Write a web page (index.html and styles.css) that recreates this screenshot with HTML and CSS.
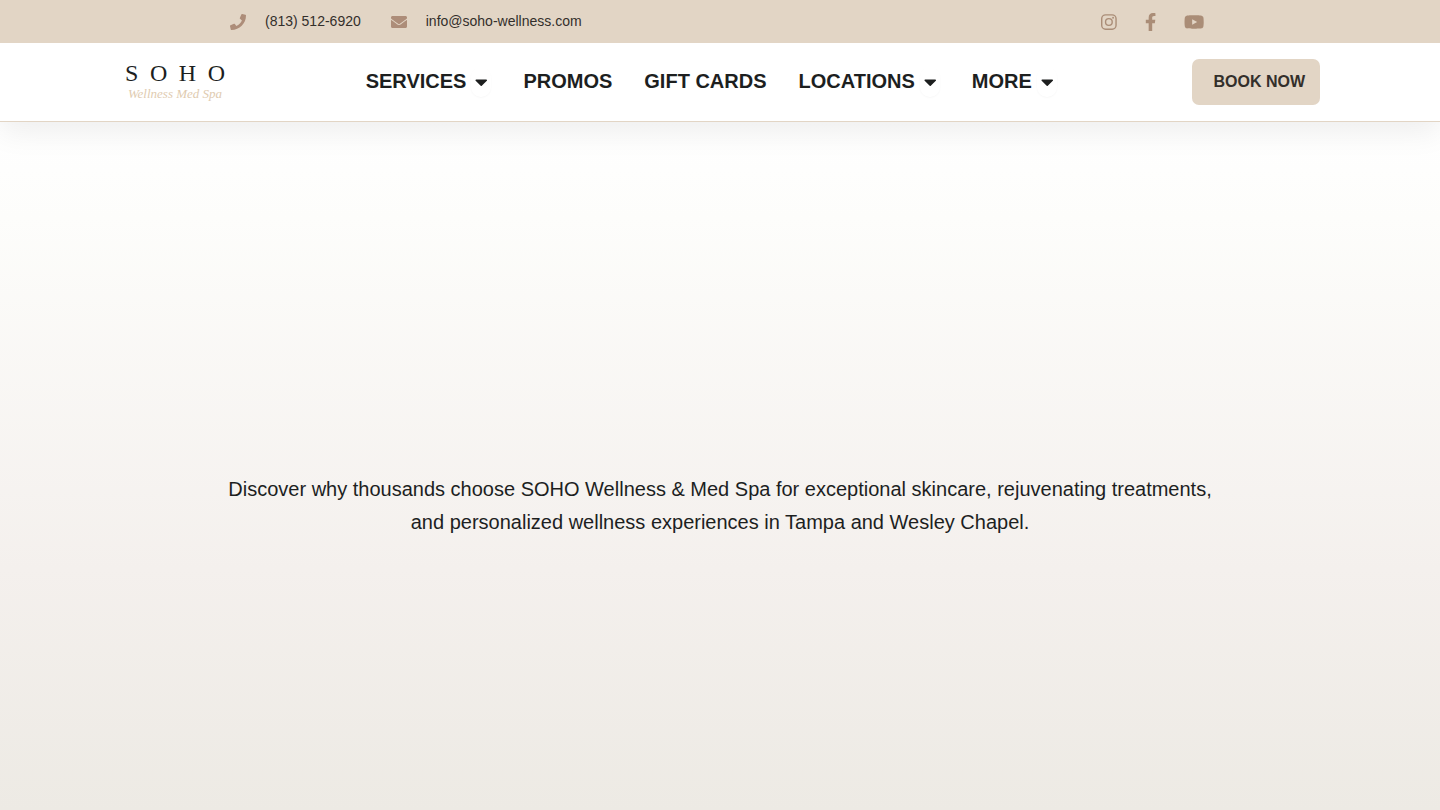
FILE: index.html
```
<!DOCTYPE html>
<html lang="en">
<head>
    <meta charset="UTF-8">
    <meta name="viewport" content="width=device-width, initial-scale=1.0">
    <title>SOHO Wellness &amp; Med Spa</title>
    <link rel="stylesheet" href="styles.css">
</head>
<body>
    <div class="topbar">
        <div class="topbar-inner">
            <ul class="contact">
                <li><a href="tel:8135126920">
                    <svg class="icon-contact" viewBox="0 0 512 512" aria-hidden="true"><path d="M493.4 24.6l-104-24c-11.3-2.6-22.9 3.3-27.5 13.9l-48 112c-4.2 9.8-1.4 21.3 6.9 28l60.6 49.6c-36 76.7-98.9 140.5-177.2 177.2l-49.6-60.6c-6.8-8.3-18.2-11.1-28-6.9l-112 48C3.9 366.5-2 378.1.6 389.4l24 104C27.1 504.2 36.7 512 48 512c256.1 0 464-207.5 464-464 0-11.2-7.7-20.9-18.6-23.4z"/></svg>
                    <span>(813) 512-6920</span>
                </a></li>
                <li><a href="mailto:info@soho-wellness.com">
                    <svg class="icon-contact" viewBox="0 0 512 512" aria-hidden="true"><path d="M502.3 190.8c3.9-3.1 9.7-.2 9.7 4.7V400c0 26.5-21.5 48-48 48H48c-26.5 0-48-21.5-48-48V195.6c0-5 5.7-7.8 9.7-4.7 22.4 17.4 52.1 39.5 154.1 113.6 21.1 15.4 56.7 47.8 92.2 47.6 35.7.3 72-32.8 92.3-47.6 102-74.1 131.6-96.3 154-113.7zM256 320c23.2.4 56.6-29.2 73.4-41.4 132.7-96.3 142.8-104.7 173.4-128.7 5.8-4.5 9.2-11.5 9.2-18.9v-19c0-26.5-21.5-48-48-48H48c-26.5 0-48 21.5-48 48v19c0 7.4 3.4 14.3 9.2 18.9 30.6 23.9 40.7 32.4 173.4 128.7 16.8 12.2 50.2 41.8 73.4 41.4z"/></svg>
                    <span>info@soho-wellness.com</span>
                </a></li>
            </ul>
            <div class="social">
                <a href="#" aria-label="Instagram">
                    <svg viewBox="0 0 448 512"><rect x="20" y="52" width="408" height="408" rx="112" fill="none" stroke="currentColor" stroke-width="40"/><circle cx="224" cy="256" r="95" fill="none" stroke="currentColor" stroke-width="40"/><circle cx="343" cy="136" r="27"/></svg>
                </a>
                <a href="#" aria-label="Facebook">
                    <svg viewBox="0 0 320 512"><path d="M279.14 288l14.22-92.66h-88.91v-60.13c0-25.35 12.42-50.06 52.24-50.06h40.42V6.26S260.43 0 225.36 0c-73.22 0-121.08 44.38-121.08 124.72v70.62H22.89V288h81.39v224h100.17V288z"/></svg>
                </a>
                <a href="#" aria-label="YouTube">
                    <svg viewBox="0 0 576 512"><path d="M549.655 124.083c-6.281-23.65-24.787-42.276-48.284-48.597C458.781 64 288 64 288 64S117.22 64 74.629 75.486c-23.497 6.322-42.003 24.947-48.284 48.597-11.412 42.867-11.412 132.305-11.412 132.305s0 89.438 11.412 132.305c6.281 23.65 24.787 41.5 48.284 47.821C117.22 448 288 448 288 448s170.78 0 213.371-11.486c23.497-6.321 42.003-24.171 48.284-47.821 11.412-42.867 11.412-132.305 11.412-132.305s0-89.438-11.412-132.305zm-317.51 213.508V175.185l142.739 81.205-142.739 81.201z"/></svg>
                </a>
            </div>
        </div>
    </div>

    <header class="header">
        <div class="header-inner">
            <a class="logo" href="#" aria-label="SOHO Wellness Med Spa">
                <span class="logo-name"><span>S</span><span>O</span><span>H</span><span>O</span></span>
                <span class="logo-tag">Wellness Med Spa</span>
            </a>

            <nav>
                <ul class="menu">
                    <li>
                        <a href="#">SERVICES</a>
                        <button class="toggle" aria-label="Open Services"><svg viewBox="0 0 320 512"><path d="M31.3 192h257.3c17.8 0 26.7 21.5 14.1 34.1L174.1 354.8c-7.8 7.8-20.5 7.8-28.3 0L17.2 226.1C4.6 213.5 13.5 192 31.3 192z"/></svg></button>
                    </li>
                    <li><a href="#">PROMOS</a></li>
                    <li><a href="#">GIFT CARDS</a></li>
                    <li>
                        <a href="#">LOCATIONS</a>
                        <button class="toggle" aria-label="Open Locations"><svg viewBox="0 0 320 512"><path d="M31.3 192h257.3c17.8 0 26.7 21.5 14.1 34.1L174.1 354.8c-7.8 7.8-20.5 7.8-28.3 0L17.2 226.1C4.6 213.5 13.5 192 31.3 192z"/></svg></button>
                    </li>
                    <li>
                        <a href="#">MORE</a>
                        <button class="toggle" aria-label="Open More"><svg viewBox="0 0 320 512"><path d="M31.3 192h257.3c17.8 0 26.7 21.5 14.1 34.1L174.1 354.8c-7.8 7.8-20.5 7.8-28.3 0L17.2 226.1C4.6 213.5 13.5 192 31.3 192z"/></svg></button>
                    </li>
                </ul>
            </nav>

            <a class="book" href="#">BOOK NOW</a>
        </div>
    </header>

    <main class="hero">
        <p>Discover why thousands choose SOHO Wellness &amp; Med Spa for exceptional skincare, rejuvenating treatments, and personalized wellness experiences in Tampa and Wesley Chapel.</p>
    </main>
</body>
</html>
```
FILE: styles.css
```
* {
    box-sizing: border-box;
}
body {
    margin: 0;
    min-height: 100vh;
    display: flex;
    flex-direction: column;
    font-family: "Liberation Sans", Arial, sans-serif;
    color: #1d1f1f;
}
a {
    color: inherit;
    text-decoration: none;
}
ul {
    list-style: none;
    margin: 0;
    padding: 0;
}
svg {
    display: block;
    fill: currentColor;
}

/* top bar */
.topbar {
    position: relative;
    z-index: 2;
    background: #e2d5c5;
}
.topbar-inner {
    max-width: 980px;
    margin: 0 auto;
    padding: 11px 6px 11px 0;
    display: flex;
    justify-content: space-between;
    align-items: center;
}
.contact {
    display: flex;
    gap: 30px;
    font-size: 14px;
    line-height: 21px;
    color: #332f2b;
}
.contact a {
    display: flex;
    align-items: center;
    gap: 19px;
}
.icon-contact {
    width: 16px;
    height: 16px;
    color: #ad8d79;
}
.social {
    display: flex;
    gap: 28px;
    color: #aa8d77;
}
.social svg {
    height: 18px;
}

/* header */
.header {
    position: relative;
    z-index: 1;
    background: #fff;
    border-bottom: 1px solid #e2d5c5;
    box-shadow: 0 10px 30px rgba(0, 0, 0, 0.07);
}
.header-inner {
    max-width: 1200px;
    margin: 0 auto;
    padding: 16px 0;
    display: flex;
    justify-content: space-between;
    align-items: center;
}
.logo {
    width: 110px;
    padding: 0 5px 4px;
}
.logo-name {
    display: flex;
    justify-content: space-between;
    font-family: "Liberation Serif", serif;
    font-size: 24px;
    line-height: 28px;
    color: #1d1f1f;
}
.logo-tag {
    display: block;
    text-align: center;
    white-space: nowrap;
    font-family: "Liberation Serif", serif;
    font-style: italic;
    font-size: 13px;
    line-height: 14px;
    color: #e0cbb0;
}
.menu {
    display: flex;
    gap: 32px;
    font-size: 20px;
    font-weight: bold;
    line-height: 24px;
}
.menu li {
    display: flex;
    align-items: center;
    gap: 5px;
}
.menu a {
    padding-bottom: 2px;
}
.toggle {
    width: 20px;
    height: 30px;
    padding: 0;
    border: 0;
    border-radius: 10px;
    background: #fff;
    color: inherit;
    box-shadow: 0 1px 2px rgba(0, 0, 0, 0.03);
    display: flex;
    align-items: center;
    justify-content: center;
}
.toggle svg {
    height: 20px;
}
.book {
    padding: 0 15px 0 21px;
    border-radius: 7px;
    background: #e2d5c5;
    color: #332f2b;
    font-size: 16px;
    font-weight: bold;
    line-height: 46px;
}

/* hero */
.hero {
    flex: 1;
    padding: 80px 20px 0;
    display: flex;
    align-items: center;
    justify-content: center;
    background: linear-gradient(#fff 0%, #fdfdfb 14%, #f4f0ed 65%, #edeae4 100%);
}
.hero p {
    max-width: 1000px;
    margin: 0;
    text-align: center;
    font-size: 20px;
    line-height: 33px;
}
```
